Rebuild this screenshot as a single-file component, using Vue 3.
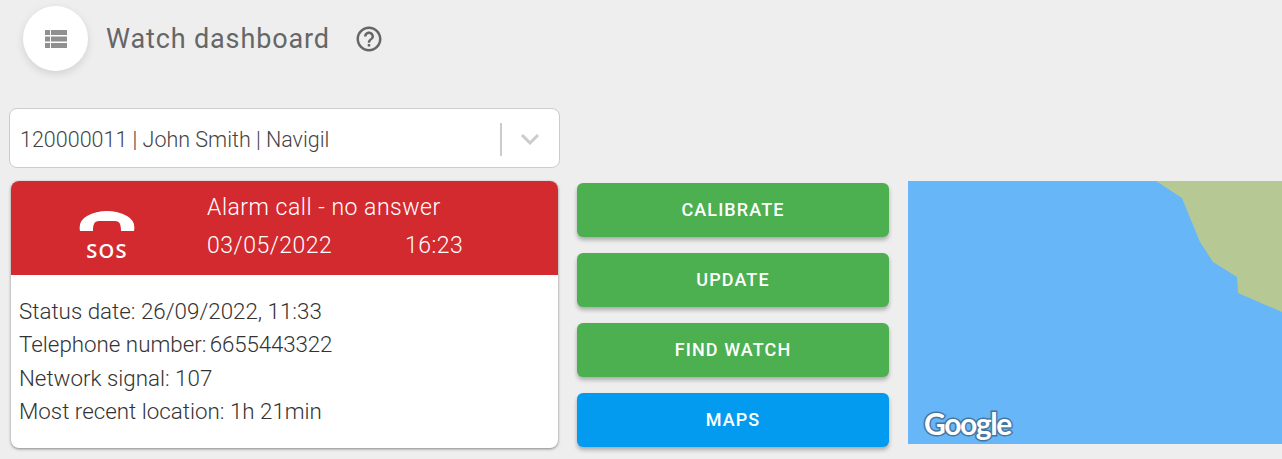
<script setup>
const details = [
  { label: 'Status date:', value: '26/09/2022, 11:33' },
  { label: 'Telephone number:', value: '6655443322', tight: true },
  { label: 'Network signal:', value: '107' },
  { label: 'Most recent location:', value: '1h 21min' },
]
const actions = [
  { label: 'CALIBRATE', kind: 'green' },
  { label: 'UPDATE', kind: 'green' },
  { label: 'FIND WATCH', kind: 'green' },
  { label: 'MAPS', kind: 'blue' },
]
</script>

<template>
  <div class="page">
    <header class="top">
      <div class="fab">
        <svg width="24" height="18" viewBox="0 0 24 18" fill="#909090">
          <rect x="1" y="0" width="5" height="5" /><rect x="7" y="0" width="16" height="5" />
          <rect x="1" y="6.5" width="5" height="5" /><rect x="7" y="6.5" width="16" height="5" />
          <rect x="1" y="13" width="5" height="5" /><rect x="7" y="13" width="16" height="5" />
        </svg>
      </div>
      <h1 class="title">Watch dashboard</h1>
      <svg class="help" width="30" height="30" viewBox="0 0 24 24" fill="#666">
        <path d="M11 18h2v-2h-2v2zm1-16C6.48 2 2 6.48 2 12s4.48 10 10 10 10-4.48 10-10S17.52 2 12 2zm0 18c-4.41 0-8-3.59-8-8s3.59-8 8-8 8 3.59 8 8-3.59 8-8 8zm0-14c-2.21 0-4 1.79-4 4h2c0-1.1.9-2 2-2s2 .9 2 2c0 2-3 1.75-3 5h2c0-2.25 3-2.5 3-5 0-2.21-1.79-4-4-4z" />
      </svg>
    </header>

    <div class="select">
      <span class="select-text">120000011 | John Smith | Navigil</span>
      <span class="select-sep"></span>
      <svg class="chev" width="20" height="12" viewBox="0 0 20 12" fill="none" stroke="#ccc" stroke-width="3">
        <path d="M2 2l8 8 8-8" />
      </svg>
    </div>

    <main class="row">
      <section class="card">
        <div class="alarm">
          <div class="alarm-icon">
            <svg width="56" height="20" viewBox="0 0 56 20" fill="#fff">
              <path d="M1 20Q-1 10 8 5C14 1.5 21 0 28 0S42 1.5 48 5Q57 10 55 20H42C42 14 41 10 36 10H20C15 10 14 14 14 20Z" />
            </svg>
            <span class="sos">SOS</span>
          </div>
          <div class="alarm-text">
            <div>Alarm call - no answer</div>
            <div class="alarm-when"><span class="alarm-date">03/05/2022</span><span>16:23</span></div>
          </div>
        </div>
        <div class="details">
          <div v-for="d in details" :key="d.label" class="detail">{{ d.label }} <span :class="{ tight: d.tight }">{{ d.value }}</span></div>
        </div>
      </section>

      <nav class="actions">
        <button v-for="a in actions" :key="a.label" class="btn" :class="a.kind">{{ a.label }}</button>
      </nav>

      <div class="map">
        <svg class="map-art" width="374" height="263" viewBox="0 0 374 263" preserveAspectRatio="none">
          <rect width="374" height="263" fill="#66b6f8" />
          <polygon points="248,0 274,17 292,61 305,81 329,96 330,112 374,131 374,0" fill="#b6c995" />
        </svg>
        <span class="google">Google</span>
      </div>
    </main>
  </div>
</template>

<style>
html, body { margin: 0; background: #eeeeee; overflow: hidden; }
</style>

<style scoped>
.page {
  width: 1282px;
  height: 459px;
  background: #eeeeee;
  font-family: Roboto, "Liberation Sans", sans-serif;
  box-sizing: border-box;
  padding-top: 6px;
}
.top { display: flex; align-items: center; height: 65px; padding-left: 23px; }
.fab {
  width: 65px; height: 65px; border-radius: 50%; background: #fff;
  box-shadow: 0 3px 8px rgba(0,0,0,.12);
  display: flex; align-items: center; justify-content: center;
}
.title {
  margin: 2px 0 0 18px; font-size: 27px; font-weight: 400; color: #666;
  letter-spacing: .87px; line-height: 63px;
}
.help { margin-left: 24px; }

.select {
  margin: 37px 0 0 9px; width: 551px; height: 60px; box-sizing: border-box;
  background: #fff; border: 1px solid #ccc; border-radius: 8px;
  display: flex; align-items: center; padding: 2px 19px 0 10px;
}
.select-text { flex: 1; font-size: 21.5px; font-weight: 300; color: #444; }
.select-sep { width: 2px; height: 33px; background: #ccc; margin: 0 18px 0 0; }

.row { display: flex; margin-top: 13px; align-items: flex-start; }
.card {
  margin-left: 11px; width: 547px; height: 267px; background: #fff; border-radius: 8px;
  overflow: hidden; box-shadow: 0 1px 3px rgba(0,0,0,.45);
}
.alarm { height: 94px; background: #d32a30; color: #fff; display: flex; }
.alarm-icon {
  width: 196px; padding: 30px 4px 0 0; box-sizing: border-box;
  display: flex; flex-direction: column; align-items: center;
}
.sos { font-family: "Open Sans", sans-serif; font-size: 20px; font-weight: 600; line-height: 26px; margin-top: 7px; letter-spacing: 1.2px; }
.alarm-text { font-size: 23px; font-weight: 300; padding-top: 8px; line-height: 38px; letter-spacing: .5px; }
.alarm-when { display: flex; }
.alarm-date { width: 198px; }
.details { padding: 20px 8px 0; }
.detail { font-size: 22.35px; font-weight: 300; color: #333; line-height: 33.3px; }
.tight { margin-left: -2px; letter-spacing: -.15px; }

.actions { margin: 1.5px 0 0 19px; width: 312px; display: flex; flex-direction: column; gap: 15.5px; }
.btn {
  height: 54.5px; border: 0; border-radius: 6px; color: #fff; font-family: inherit;
  font-size: 18px; font-weight: 500; letter-spacing: 1.1px; padding: 0 0 1px;
  box-shadow: 0 3px 4px rgba(0,0,0,.28);
}
.green { background: #4caf50; }
.blue { background: #039bf0; }

.map { position: relative; margin-left: 19px; width: 374px; height: 263px; }
.map-art { display: block; }
.google {
  position: absolute; left: 16px; bottom: 4px; font-family: Lato, sans-serif;
  font-size: 30px; font-weight: 700; letter-spacing: -1.4px; color: #fff; line-height: 34px;
  -webkit-text-stroke: 3px #44759e; paint-order: stroke fill;
}
</style>
